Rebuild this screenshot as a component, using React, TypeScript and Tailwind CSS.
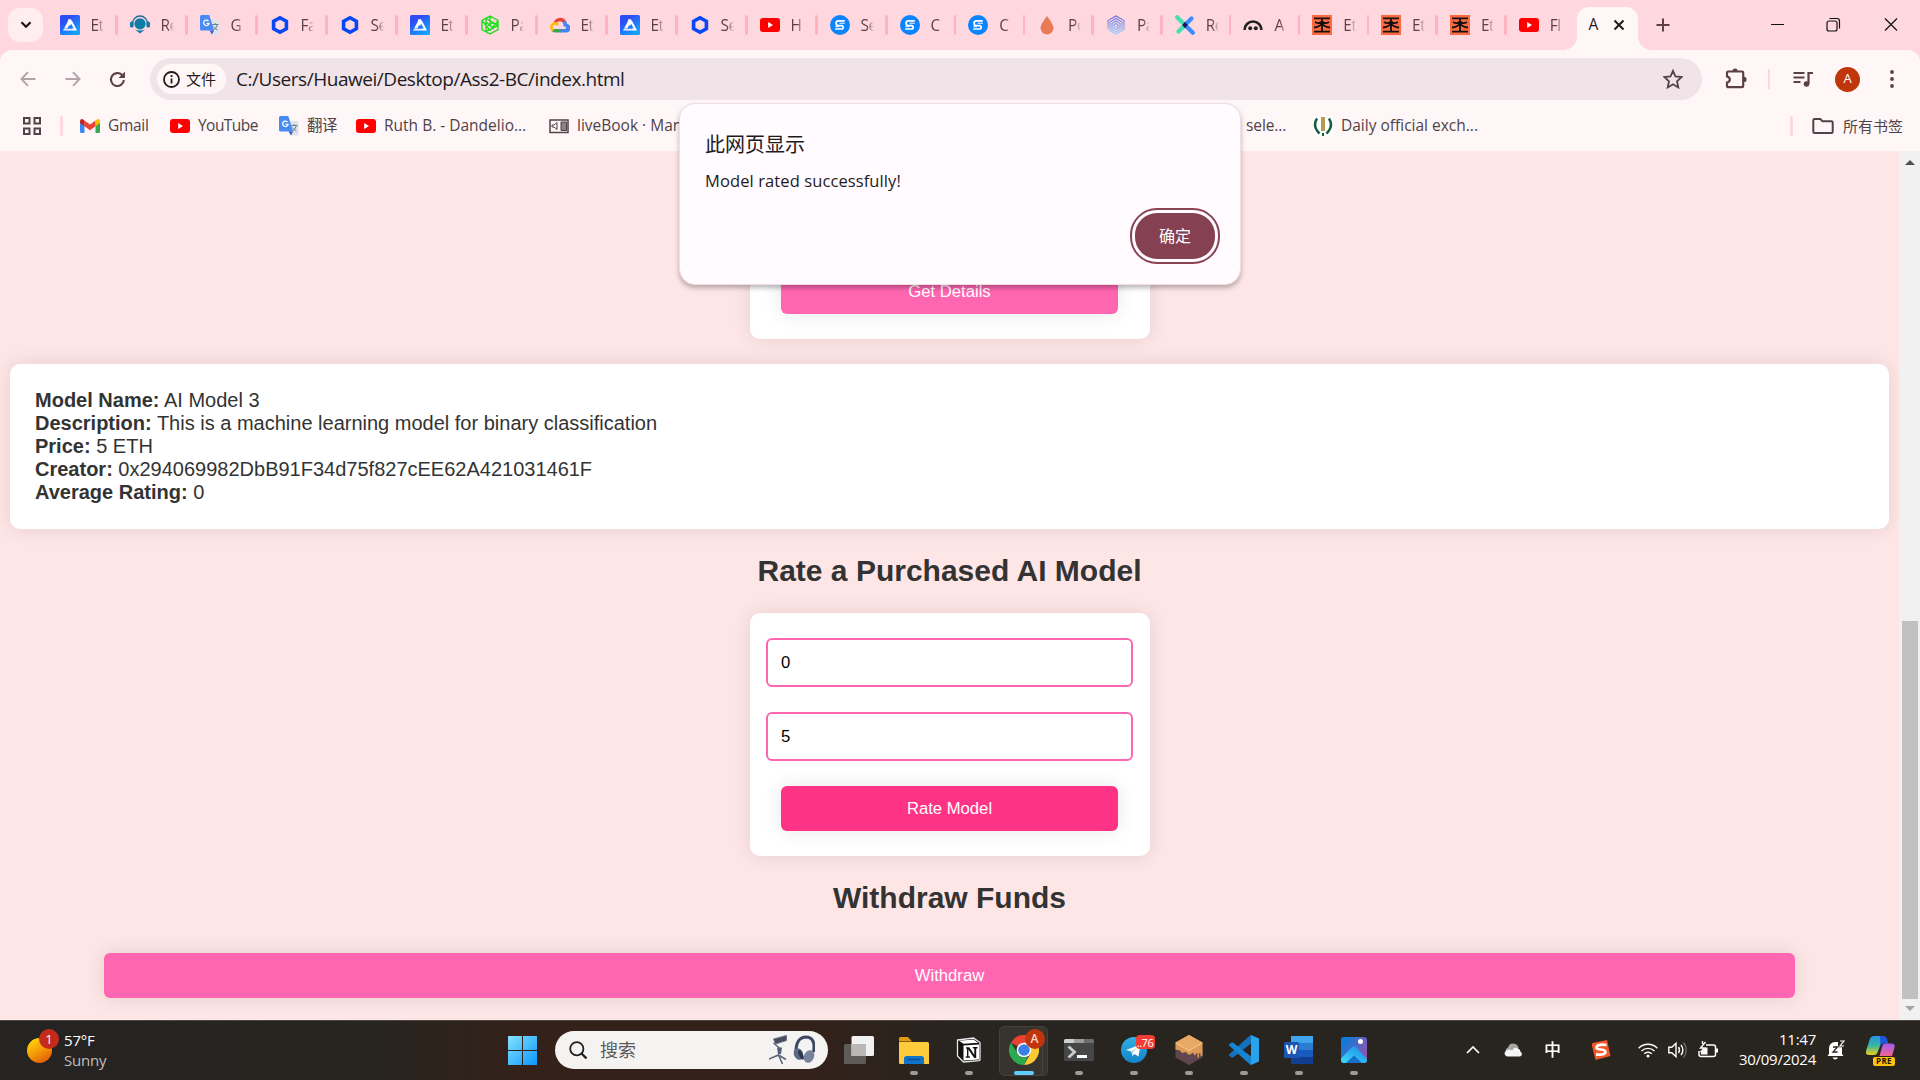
import React from "react";

type IconProps = { className?: string };

const Arweave = ({ className = "w-5 h-5" }: IconProps) => (
  <svg viewBox="0 0 20 20" className={className}>
    <defs>
      <linearGradient id="arb" x1="0" y1="0" x2="0.7" y2="1">
        <stop offset="0.3" stopColor="#2f4df5" />
        <stop offset="1" stopColor="#12a5ff" />
      </linearGradient>
    </defs>
    <rect width="20" height="20" rx="1.5" fill="url(#arb)" />
    <path d="M8.300 4.200h2.700l1.200 2.600-1.900 3.700-1.400-.100-1.600 3h6.500l-2.800-5 1.200-2.300L17 15.600H3L7.600 7Z" fill="#fff" />
    <path d="m2.500 13.700 9.500 0" stroke="#2b63f8" strokeWidth=".6" fill="none" />
  </svg>
);
const Headset = () => (
  <svg viewBox="0 0 20 20" className="w-5 h-5">
    <path d="M2.500 10V8.500a7.500 7.500 0 0 1 15 0V10" fill="none" stroke="#1b6f94" strokeWidth="1.300" />
    <circle cx="10" cy="8.800" r="5.600" fill="#0f7ca8" />
    <rect x="0" y="6.500" width="3.600" height="6" rx="1.500" fill="#0f7ca8" />
    <rect x="16.400" y="6.500" width="3.600" height="6" rx="1.500" fill="#0f7ca8" />
    <path d="M5 14.500Q10 16.500 15 14.500L10 18.500Z" fill="#0f7ca8" />
  </svg>
);
const Translate = () => (
  <svg viewBox="0 0 20 20" className="w-5 h-5">
    <path d="M8 5h10.500q1 0 1 1v12.500q0 1-1 1H12Z" fill="#dfe3e6" />
    <path d="M1.500 0h7.800l4.800 15.500H1.500Q0 15.500 0 14V1.500Q0 0 1.500 0Z" fill="#4a8af4" />
    <path d="M9.500 15.500h4.600L12 19.500Z" fill="#3262c9" />
    <path d="M8.500 6.200A2.700 2.700 0 1 0 9 8.300H6.600" fill="none" stroke="#fff" strokeWidth="1.300" />
    <path d="M12 9.500h6.500M15.200 8v1.500M17.300 9.700q-1 3.800-3.500 5.300M13.500 11.500q1.500 2.500 4 3.500" fill="none" stroke="#6b8198" strokeWidth="1" />
  </svg>
);
const Chainlink = () => (
  <svg viewBox="0 0 20 20" className="w-5 h-5">
    <path d="M10 2.700 16.400 6.300v7.400L10 17.300 3.600 13.700V6.300Z" fill="none" stroke="#0847f7" strokeWidth="3.600" />
  </svg>
);
const GreenGem = () => (
  <svg viewBox="0 0 20 20" className="w-5 h-5">
    <path d="M10 1 18 5.500v9L10 19 2 14.500v-9ZM6 3.500v13M6 3.500l12 7-12 6M6 7l8 7M10 1v8M2 5.500l8 10M18 6l-8 9.500M6 12l8-5" fill="none" stroke="#1fe01f" strokeWidth="1.400" />
  </svg>
);
const Cloud = () => (
  <svg viewBox="0 0 20 20" className="w-5 h-5">
    <path d="M3.600 7.500A6.800 6.800 0 0 1 15.800 6l-1.600 2.500a4.700 4.700 0 0 0-7.200-.8Z" fill="#ea4335" />
    <path d="M15.500 5.500q1.600 1.400 1.600 3.400A4.300 4.300 0 0 1 15.500 17.500H10v-3.400h5.300a1.500 1.500 0 0 0 0-2.600h-1.800v-1.100q0-1.700-1.200-2.600Z" fill="#4285f4" />
    <path d="M10.500 14.100v3.400H5.200a5 5 0 0 1-3.400-1.300L4.300 14Z" fill="#34a853" />
    <path d="M2.200 16.500A5.200 5.200 0 1 1 9 8.700L7 11a2.300 2.300 0 1 0-2.700 3.200Z" fill="#fbbc05" />
  </svg>
);
const YouTube = () => (
  <svg viewBox="0 0 20 20" className="w-5 h-5">
    <rect y="3" width="20" height="14" rx="3" fill="#f00" />
    <path d="m8.200 7 4.800 3-4.800 3Z" fill="#fff" />
  </svg>
);
const BlueS = () => (
  <svg viewBox="0 0 20 20" className="w-5 h-5">
    <circle cx="10" cy="10" r="10" fill="#0a84ff" />
    <path d="M14.800 5.800H8.500a2.400 2.400 0 0 0 0 4.800h3a1.700 1.700 0 0 1 0 3.400H5.200" fill="none" stroke="#fff" strokeWidth="1.700" />
    <path d="M14.800 8.200H9.500M5.200 11.700h4" fill="none" stroke="#fff" strokeWidth="1" />
  </svg>
);
const Drop = () => (
  <svg viewBox="0 0 20 20" className="w-5 h-5">
    <path d="M10 1q6.500 8.500 6.500 12a6.500 6.500 0 0 1-13 0Q3.500 9.500 10 1Z" fill="#ea7a56" />
  </svg>
);
const Swirl = () => (
  <svg viewBox="0 0 20 20" className="w-5 h-5">
    <defs>
      <linearGradient id="sw" x1="0" y1="0" x2="0" y2="1">
        <stop offset="0" stopColor="#6a6fd6" />
        <stop offset="1" stopColor="#9ed4ff" />
      </linearGradient>
    </defs>
    <path d="M2 14.500V5.500L10 1l8 4.500v9L10 19l-6-3.500V7L10 3.500 16 7v6.500L10 17l-4-2.500V8.500L10 6l4 2.500v4L10 14.500 8 13V9.800L10 8.500l2 1.500v1.800H10" fill="none" stroke="url(#sw)" strokeWidth="1.200" />
  </svg>
);
const CrossX = () => (
  <svg viewBox="0 0 20 20" className="w-5 h-5" strokeLinecap="round" strokeWidth="4.200">
    <path d="M16.500 3.500 10 10" stroke="#3b8cff" />
    <path d="M10 10 17.800 17.800" stroke="#3b8cff" />
    <path d="M2.200 2.200 10 10M10 10 3.500 16.500" stroke="#45e0b0" />
    <path d="m10 6.700 2.800 3.300L10 13.300 7.200 10Z" fill="#1a1266" stroke="none" />
  </svg>
);
const Arch = () => (
  <svg viewBox="0 0 20 20" className="w-5 h-5">
    <path d="M1.500 15a8.500 8.500 0 0 1 17 0" fill="none" stroke="#222" strokeWidth="2.500" />
    <circle cx="7.200" cy="13.300" r="2" fill="#222" />
    <circle cx="12.800" cy="13.300" r="2" fill="#222" />
  </svg>
);
const Orange = () => (
  <svg viewBox="0 0 20 20" className="w-5 h-5">
    <rect width="20" height="20" fill="#fb6a41" />
    <path d="M2 3.400h16M2 16.600h16M10 3.400v13.200M3 7q4 2.500 7-.500 3 3 7 .500M2 12.500q5.500-.500 8-4 2.500 3.500 8 4" fill="none" stroke="#15100e" strokeWidth="1.800" />
  </svg>
);

const tabs: { icon: () => React.ReactElement; label: string; narrow?: boolean }[] = [
  { icon: Arweave, label: "Et" },
  { icon: Headset, label: "Re" },
  { icon: Translate, label: "G" },
  { icon: Chainlink, label: "Fa" },
  { icon: Chainlink, label: "Se" },
  { icon: Arweave, label: "Et" },
  { icon: GreenGem, label: "Pa" },
  { icon: Cloud, label: "Et" },
  { icon: Arweave, label: "Et" },
  { icon: Chainlink, label: "Se" },
  { icon: YouTube, label: "H" },
  { icon: BlueS, label: "Se" },
  { icon: BlueS, label: "C", narrow: true },
  { icon: BlueS, label: "C", narrow: true },
  { icon: Drop, label: "Po", narrow: true },
  { icon: Swirl, label: "Pa", narrow: true },
  { icon: CrossX, label: "Re", narrow: true },
  { icon: Arch, label: "A", narrow: true },
  { icon: Orange, label: "Et", narrow: true },
  { icon: Orange, label: "Et", narrow: true },
  { icon: Orange, label: "Et", narrow: true },
];

const TabItem = ({ icon: I, label, narrow, last }: { icon: () => React.ReactElement; label: string; narrow?: boolean; last?: boolean }) => (
  <div className={`relative flex h-[50px] shrink-0 items-center pl-[13px] ${narrow ? "w-[68.800px]" : "w-[70px]"}`}>
    <I />
    <span className="ml-[11px] w-[20px] whitespace-nowrap text-[15.500px] leading-5 tracking-[-0.500px] text-[#5c4047] [mask-image:linear-gradient(90deg,#000_6px,transparent_13px)]">
      {label}
    </span>
    {!last && <span className="absolute right-[-1px] top-[15px] h-5 w-[2.500px] rounded-full bg-[#ffb3c1]" />}
  </div>
);

const TabStrip = () => (
  <div className="flex h-[50px] items-center bg-[#ffd7de]">
    <div className="ml-2 flex h-[34px] w-[35px] shrink-0 items-center justify-center rounded-[12px] bg-[#ffedf0]">
      <svg viewBox="0 0 12 8" className="h-2 w-3"><path d="m1.500 1.300 4.500 4.400 4.500-4.400" fill="none" stroke="#1e1216" strokeWidth="2.200" /></svg>
    </div>
    <div className="ml-[3.500px] flex">
      {tabs.map((t, i) => <TabItem key={i} {...t} last={false} />)}
      <TabItem icon={YouTube} label="Fl" narrow last />
    </div>
    <div className="relative ml-[3px] mt-auto flex h-[43px] w-[61px] shrink-0 items-center rounded-t-[12px] bg-[#fff7f7] pb-[7px] pl-[11px] pt-0">
      <span className="absolute -left-[13px] bottom-0 h-[13px] w-[13px] bg-[radial-gradient(circle_at_0_0,transparent_12.500px,#fff7f7_13px)]" />
      <span className="absolute -right-[13px] bottom-0 h-[13px] w-[13px] bg-[radial-gradient(circle_at_100%_0,transparent_12.500px,#fff7f7_13px)]" />
      <span className="w-[25px] text-[15.500px] text-[#241a1d]">A</span>
      <svg viewBox="0 0 12 12" className="h-3 w-3"><path d="m1.500 1.500 9 9m0-9-9 9" stroke="#1f1a1b" strokeWidth="2" /></svg>
    </div>
    <svg viewBox="0 0 14 14" className="ml-[18px] h-[14px] w-[14px] shrink-0"><path d="M7 .500v13M.500 7h13" stroke="#5c4047" strokeWidth="2" /></svg>
    <svg viewBox="0 0 130 16" className="ml-auto mr-[21px] h-4 w-[130px] shrink-0" fill="none" stroke="#111" strokeWidth="1.200">
      <path d="M2 7.500h13M116 1.500l12 12m0-12-12 12" />
      <rect x="58" y="4" width="10" height="10" rx="2" />
      <path d="M60.500 1.500h7.500q2.500 0 2.500 2.500v7.500" />
    </svg>
  </div>
);

const Toolbar = () => (
  <div className="bg-[#ffd7de]">
    <div className="flex h-[58px] items-center rounded-t-[12px] bg-[#fff7f7]">
      <svg viewBox="0 0 16 16" className="ml-5 h-4 w-4 shrink-0"><path d="M15.500 8H1.500M8 1.200 1.400 8 8 14.800" fill="none" stroke="#b3a2a7" strokeWidth="1.900" /></svg>
      <svg viewBox="0 0 16 16" className="ml-[29px] h-4 w-4 shrink-0"><path d="M.500 8h14M8 1.200 14.600 8 8 14.800" fill="none" stroke="#b3a2a7" strokeWidth="1.900" /></svg>
      <svg viewBox="0 0 16 16" className="ml-[28px] h-[17px] w-[17px] shrink-0"><path d="M14 8.500A6.100 6.100 0 1 1 12.300 3.800L14 5.500" fill="none" stroke="#5c4047" strokeWidth="2" /><path d="M15 .500v6H9Z" fill="#5c4047" /></svg>
      <div className="ml-6 flex h-[42px] w-[1552px] shrink-0 items-center rounded-full bg-[#f1e4e9] pl-[7px] pr-[19px]">
        <div className="flex h-[30px] w-[69px] items-center rounded-full bg-[#fff7f7] pl-[6px]">
          <svg viewBox="0 0 17 17" className="h-[17px] w-[17px]"><circle cx="8.500" cy="8.500" r="7.500" fill="none" stroke="#27191d" strokeWidth="1.800" /><path d="M8.500 7.500v5M8.500 4v2" stroke="#27191d" strokeWidth="1.800" /></svg>
          <span className="ml-[6px] whitespace-nowrap pt-px text-[15px] text-[#27191d]">文件</span>
        </div>
        <span className="ml-[10px] whitespace-nowrap text-[19px] tracking-[-0.460px] text-[#231a1d]">C:/Users/Huawei/Desktop/Ass2-BC/index.html</span>
        <svg viewBox="0 0 20 20" className="ml-auto h-5 w-5"><path d="m10 1.800 2.500 5.700 6 .600-4.500 4.200 1.300 6.100L10 15.200l-5.300 3.200L6 12.300 1.500 8.100l6-.600Z" fill="none" stroke="#4f4347" strokeWidth="1.800" /></svg>
      </div>
      <svg viewBox="0 0 22 22" className="ml-[23px] h-[22px] w-[22px] shrink-0"><path d="M3.500 3.500H17q1.200 0 1.200 1.200V18q0 1.200-1.200 1.200H3.300Q2 19.200 2 18v-3.400q2.800-.600 2.800-3T2 8.400V4.800Q2 3.500 3.300 3.500Z" fill="none" stroke="#5c4047" strokeWidth="2.200" /><path d="M7.500 3a2.600 2.600 0 0 1 5.200 0ZM19 8.800a2.600 2.600 0 0 1 0 5.200Z" fill="#5c4047" /></svg>
      <span className="ml-[21px] h-5 w-[2px] bg-[#ffd7de]" />
      <svg viewBox="0 0 20 18" className="ml-[23px] h-[18px] w-5 shrink-0" fill="none" stroke="#5c4047" strokeWidth="2.200"><path d="M.500 3h11M.500 7.500h11M.500 12h7M15.500 14V3h4.500" /><circle cx="13.500" cy="14" r="2.200" fill="#5c4047" strokeWidth="1.200" /></svg>
      <span className="ml-[22px] flex h-[25px] w-[25px] shrink-0 items-center justify-center rounded-full bg-[#bf360c] text-[13px] text-white">A</span>
      <svg viewBox="0 0 4 18" className="ml-[30px] h-[18px] w-1 shrink-0" fill="#5c4047"><circle cx="2" cy="2" r="1.900" /><circle cx="2" cy="9" r="1.900" /><circle cx="2" cy="16" r="1.900" /></svg>
    </div>
  </div>
);

const Bookmark = ({ icon, label, width, tracking = "" }: { icon: React.ReactNode; label: string; width: string; tracking?: string }) => (
  <div className={`flex shrink-0 items-center gap-2 whitespace-nowrap ${width} ${tracking}`}>
    {icon}
    <span>{label}</span>
  </div>
);

const Bookmarks = () => (
  <div className="flex h-[43px] items-center bg-[#fff7f7] pb-[7px] pt-0 text-[15.500px] text-[#4f4347]">
    <svg viewBox="0 0 18 18" className="ml-[23px] h-[18px] w-[18px] shrink-0" fill="none" stroke="#4f4347" strokeWidth="2"><path d="M1 1h5.500v5.500H1ZM11.500 1H17v5.500h-5.500ZM1 11.500h5.500V17H1ZM11.500 11.500H17V17h-5.500Z" /></svg>
    <span className="ml-[19px] mr-[17.500px] h-5 w-[2.500px] shrink-0 rounded-full bg-[#ffd7de]" />
    <Bookmark
      width="w-[90px]"
      label="Gmail"
      tracking="tracking-[-0.300px]"
      icon={
        <svg viewBox="0 0 20 20" className="h-5 w-5">
          <path d="M0 5v10.500Q0 17 1.500 17H4.500V8Z" fill="#4285f4" />
          <path d="M15.500 8v9h3q1.500 0 1.500-1.500V5Z" fill="#34a853" />
          <path d="m4.500 4.500 5.500 4 5.500-4v5.700L10 14.300l-5.500-4.100Z" fill="#ea4335" />
          <path d="M0 5.300Q0 3 2 3q1 0 2.500 1.500v5.700L0 7Z" fill="#c5221f" />
          <path d="M20 5.300Q20 3 18 3q-1 0-2.500 1.500v5.700L20 7Z" fill="#fbbc04" />
        </svg>
      }
    />
    <Bookmark width="w-[109px]" label="YouTube" tracking="tracking-[-0.550px]" icon={<YouTube />} />
    <Bookmark width="w-[77px]" label="翻译" tracking="tracking-[-0.500px]" icon={<Translate />} />
    <Bookmark width="w-[193px]" label="Ruth B. - Dandelio..." icon={<YouTube />} />
    <div className="w-[697px] shrink-0">
      <Bookmark
        width="w-[180px]"
        label="liveBook · Manning"
        icon={
          <svg viewBox="0 0 20 20" className="h-5 w-5" fill="none" stroke="#4f4347"><path d="M1 4h18v12.500H1Z" strokeWidth="1.500" /><path d="M12 6h5.500v8.500H12Z" fill="#8b8386" strokeWidth="1" /><path d="M3 9h2l3-2.500v7L5 11H3Z" strokeWidth="1" /></svg>
        }
      />
    </div>
    <span className="w-[67px] shrink-0 whitespace-nowrap tracking-[-0.100px]">sele...</span>
    <Bookmark
      width="w-[250px]"
      label="Daily official exch..."
      icon={
        <svg viewBox="0 0 20 20" className="h-5 w-5"><rect width="20" height="20" fill="#fff" /><path d="M4 2.500Q-1 10 6.500 17.500M16 2.500Q21 10 13.500 17.500" fill="none" stroke="#155a3c" strokeWidth="2.500" /><path d="M8 1h4v14H8Z" fill="#b39b52" /><path d="M9 17h2v3H9Z" fill="#155a3c" /></svg>
      }
    />
    <span className="ml-auto h-5 w-[2.500px] shrink-0 rounded-full bg-[#ffd7de]" />
    <svg viewBox="0 0 22 18" className="ml-[19px] h-[18px] w-[22px] shrink-0"><path d="M2.500 2h5.800l2.200 2.300h9q1.200 0 1.200 1.200v9.300q0 1.200-1.200 1.200h-17Q1.300 16 1.300 14.800V3.200Q1.300 2 2.500 2Z" fill="none" stroke="#4f4347" strokeWidth="2" /></svg>
    <span className="ml-[9px] mr-[17px] whitespace-nowrap text-[15px]">所有书签</span>
  </div>
);

const shadow = "shadow-[0_0_19px_rgba(0,0,0,0.1)]";

const PinkButton = ({ children, className }: { children: React.ReactNode; className: string }) => (
  <button className={`flex h-[45px] items-center justify-center rounded-[6px] pb-px text-[16.670px] text-white ${shadow} ${className}`}>{children}</button>
);
const Field = ({ value }: { value: string }) => (
  <input readOnly value={value} className="mb-[25px] block h-[49px] w-[367px] rounded-[6px] border-2 border-[#ff66b2] bg-white px-[13px] text-[16.670px] text-black outline-none" />
);

const details = [
  ["Model Name:", "AI Model 3"],
  ["Description:", "This is a machine learning model for binary classification"],
  ["Price:", "5 ETH"],
  ["Creator:", "0x294069982DbB91F34d75f827cEE62A421031461F"],
  ["Average Rating:", "0"],
];

const Page = () => (
  <main className="flex h-[869px] w-[1899px] flex-col items-center overflow-hidden bg-[#ffe6e6] font-['Liberation_Sans',Arial,sans-serif] text-[20px] leading-[23px] text-[#333]">
    <section className={`flex h-[188px] w-[400px] shrink-0 flex-col items-center justify-end rounded-[10px] bg-white pb-[25px] ${shadow}`}>
      <PinkButton className="w-[337px] bg-[#ff66b2]">Get Details</PinkButton>
    </section>
    <section className={`mt-[25px] h-[165px] w-[1879px] shrink-0 rounded-[10px] bg-white p-[25px] ${shadow}`}>
      {details.map(([k, v]) => (
        <p key={k}><strong>{k}</strong> {v}</p>
      ))}
    </section>
    <h2 className="mt-[25px] h-[34px] shrink-0 text-[30px] font-bold leading-[34px]">Rate a Purchased AI Model</h2>
    <section className={`mt-[25px] flex h-[243px] w-[400px] shrink-0 flex-col items-center rounded-[10px] bg-white pt-[25px] ${shadow}`}>
      <Field value="0" />
      <Field value="5" />
      <PinkButton className="w-[337px] bg-[#ff3385]">Rate Model</PinkButton>
    </section>
    <h2 className="mt-[25px] h-[34px] shrink-0 text-[30px] font-bold leading-[34px]">Withdraw Funds</h2>
    <PinkButton className="mt-[38px] w-[1691px] shrink-0 bg-[#ff66b2]">Withdraw</PinkButton>
  </main>
);

const Scrollbar = () => (
  <aside className="flex h-[869px] w-[21px] flex-col items-center bg-[#f1f1f1]">
    <svg viewBox="0 0 10 5" className="mt-[9px] h-[5px] w-[10px]"><path d="m0 5 5-5 5 5Z" fill="#505050" /></svg>
    <div className="mt-auto h-[378px] w-[16px] bg-[#c1c1c1]" />
    <svg viewBox="0 0 10 5" className="mb-[9px] mt-[7px] h-[5px] w-[10px]"><path d="m0 0 5 5 5-5Z" fill="#a3a3a3" /></svg>
  </aside>
);

const Alert = () => (
  <div className="absolute left-[679px] top-[103px] flex h-[182px] w-[562px] flex-col rounded-[16px] border border-[#f1dde3] bg-[#fffbff] px-[25px] pt-[29px] shadow-[0_3px_5px_rgba(0,0,0,0.28)]">
    <p className="text-[20px] leading-6 text-[#1f1a1c]">此网页显示</p>
    <p className="mt-[12px] text-[16.500px] leading-6 tracking-[0.100px] text-[#1f1a1c]">Model rated successfully!</p>
    <button className="absolute right-[20px] top-[104px] flex h-[56px] w-[90px] items-center justify-center rounded-[27px] border-[2.500px] border-[#8a4257]">
      <span className="flex h-[46px] w-[80px] items-center justify-center rounded-[22px] bg-[#854052] text-[16px] text-white">确定</span>
    </button>
  </div>
);

const Notion = () => (
  <svg viewBox="0 0 26 26" className="h-[26px] w-[26px]"><path d="M1.500 3 17.500 1 24 5.500V22.500q0 1-1 1.200L7.500 25 1.500 19Z" fill="#111" stroke="#e8e8e8" strokeWidth="1.300" /><path d="m3 3.800 14.500-1.300 4.500 3.200-14.500 1Z" fill="#fff" /><path d="M7.500 8.500 23 7.500v15L7.500 23.500Z" fill="#fff" /><path d="M10 10.200h3.300l5 7.500v-6.200l-1.500-.300v-1.200h4.700v1.200l-1.300.500v9.300h-2l-5.800-8.500v6.800l1.600.300v1.200H9.700v-1.200l1.300-.400V11.700l-1-.300Z" fill="#111" /></svg>
);
const Chrome = () => (
  <div className="relative h-[30px] w-[30px]">
    <svg viewBox="0 0 30 30" className="h-[30px] w-[30px]">
      <path d="M15 15 2 7.500A15 15 0 0 1 28 7.500L15 8Z" fill="#ea4335" />
      <path d="M15 0A15 15 0 0 1 28 7.500H15Z" fill="#ea4335" />
      <path d="M28 7.500A15 15 0 0 1 15 30L21.500 18.500 15 7.500Z" fill="#fcc934" />
      <path d="M2 7.500 8.800 18.800Q11 22.500 15 22.500q2 0 4-1L15 30A15 15 0 0 1 2 7.500Z" fill="#2da94f" />
      <circle cx="15" cy="15" r="7.300" fill="#fff" />
      <circle cx="15" cy="15" r="5.800" fill="#3b7de9" />
    </svg>
    <span className="absolute -right-[6px] -top-[6px] flex h-5 w-5 items-center justify-center rounded-full bg-[#bf360c] text-[12px] font-semibold text-[#ffd8cd]">A</span>
  </div>
);
const Terminal = () => (
  <svg viewBox="0 0 30 22" className="h-[22px] w-[30px]"><rect width="30" height="22" rx="1.500" fill="#454647" /><path d="M1.500 0H10v4H0V1.500Q0 0 1.500 0Z" fill="#cfcfcf" /><path d="M10 0h10v4H10Z" fill="#9c9c9c" /><path d="M20 0h8.500Q30 0 30 1.500V4H20Z" fill="#6c6c6c" /><path d="m4.500 7.500 6 5.500-6 5.500" fill="none" stroke="#ccc" strokeWidth="2.800" /><path d="M13 17.500h10" stroke="#fff" strokeWidth="3" /></svg>
);
const Telegram = () => (
  <div className="relative h-[26px] w-[26px]">
    <svg viewBox="0 0 26 26" className="h-[26px] w-[26px]"><defs><linearGradient id="tg" x1="0" y1="0" x2="0" y2="1"><stop stopColor="#33aee5" /><stop offset="1" stopColor="#1283c9" /></linearGradient></defs><circle cx="13" cy="13" r="13" fill="url(#tg)" /><path d="M5 13 19.500 7.500 17.500 19.500 13.500 17l-2.200 2-.800-4.500Z" fill="#fff" /><path d="m10.500 14.500 6-4.500-4.300 5.500-.900 3.500Z" fill="#b9d9ee" /></svg>
    <span className="absolute -top-[2px] left-[15px] flex h-[14px] w-[19px] items-center justify-center rounded-[4px] bg-[#f23c34] text-[11px] leading-none tracking-[-0.500px] text-white">..76</span>
  </div>
);
const Ganache = () => (
  <svg viewBox="0 0 28 30" className="h-[30px] w-[28px]"><path d="M14 0 27.500 7.500v15L14 30 .500 22.500v-15Z" fill="#614650" /><path d="M14 0 27.500 7.500v13q-1 1.500-2 0v-2q-.800-1-1.500 0v4h-1.500v-4q-1-1-1.500 0v1q-1 1-2 0l-1-2-2.500 2h-2.500l-2-2.500-4 1-2-2.500L.500 14.500v-7Z" fill="#dc9c58" /><path d="M14 0 27.500 7.500 14 15 .500 7.500Z" fill="#e8a964" /><path d="m1 8 13 7.500L27 8" fill="none" stroke="#f3c185" strokeWidth="1.200" /></svg>
);
const VSCode = () => (
  <svg viewBox="0 0 30 30" className="h-[30px] w-[30px]"><path d="M22 0v8.500L4 22.500 2.500 22.500 0 20.500v-1L21 .500Z" fill="#1272bd" /><path d="M22 30v-8.500L4 7.500H2.500L0 9.500v1L21 29.500Z" fill="#1685d1" /><path d="M22 0 30 3.500v23L22 30Z" fill="#29a3ee" /></svg>
);
const Word = () => (
  <div className="relative h-[28px] w-[29px]">
    <svg viewBox="0 0 29 28" className="h-[28px] w-[29px]"><path d="M7 0h22v7H7Z" fill="#41a5ee" /><path d="M7 7h22v7H7Z" fill="#2b7cd3" /><path d="M7 14h22v7H7Z" fill="#185abd" /><path d="M7 21h22v7H7Z" fill="#103f91" /><rect y="6" width="15" height="16" rx="1.500" fill="#1d55b4" /></svg>
    <span className="absolute left-0 top-[6px] flex h-4 w-[15px] items-center justify-center text-[12px] font-bold leading-none text-white">W</span>
  </div>
);
const Photos = () => (
  <svg viewBox="0 0 26 26" className="h-[26px] w-[26px]"><defs><linearGradient id="ph" x1="0" y1="0" x2="1" y2=".6"><stop offset=".2" stopColor="#1379d8" /><stop offset="1" stopColor="#8f55b0" /></linearGradient><linearGradient id="pm" x1="0" y1="1" x2="1" y2="0"><stop stopColor="#3fdcf5" /><stop offset="1" stopColor="#1a87e8" /></linearGradient></defs><rect width="26" height="26" rx="3" fill="url(#ph)" /><path d="M0 21.500 11 10q2-1.500 4 0L26 22v1q0 3-3 3H3q-3 0-3-3Z" fill="url(#pm)" /><path d="m5 26 8-7.500L21 26Z" fill="#176fc9" /><circle cx="19.500" cy="4.500" r="2.500" fill="#fff" /></svg>
);
const TaskView = () => (
  <svg viewBox="0 0 30 28" className="h-[28px] w-[30px]"><rect y="8" width="22" height="20" rx="1.500" fill="#5e5c5b" /><rect x="7.500" width="22.500" height="20" rx="1.500" fill="#f1f1f1" /><path d="M7.500 8H22v12H7.500Z" fill="#b9b8b7" /></svg>
);
const Explorer = () => (
  <svg viewBox="0 0 30 27" className="h-[27px] w-[30px]"><path d="M1.500 0H9l4 4.500H0V1.500Q0 0 1.500 0Z" fill="#e09c0b" /><path d="M0 5h28.500Q30 5 30 6.500V27H1.500Q0 27 0 25.500Z" fill="#ffcb3d" /><path d="M5 27v-5.500Q5 19 7.500 19h15q2.500 0 2.500 2.500V27Z" fill="#1173c9" /><path d="M8.500 22.500h13" stroke="#0a4f94" strokeWidth="1.300" /></svg>
);

const apps: { icon: React.ReactNode; active?: boolean; idle?: boolean }[] = [
  { icon: <TaskView />, idle: true },
  { icon: <Explorer /> },
  { icon: <Notion /> },
  { icon: <Chrome />, active: true },
  { icon: <Terminal /> },
  { icon: <Telegram /> },
  { icon: <Ganache /> },
  { icon: <VSCode /> },
  { icon: <Word /> },
  { icon: <Photos /> },
];

const Taskbar = () => (
  <footer className="flex h-[60px] items-center border-t border-[#4b4b44] bg-[linear-gradient(90deg,#252423_0%,#28241f_20%,#33211a_27%,#33211a_42%,#28241f_50%,#28241e_100%)] pb-px">
    <div className="flex w-[508px] shrink-0 items-center">
      <div className="relative mb-[8px] ml-[27px] h-[34px] w-[32px]">
        <span className="absolute bottom-0 left-0 h-[25px] w-[25px] rounded-full bg-[linear-gradient(150deg,#ffd60a_10%,#f59a08_50%,#e05206_95%)]" />
        <span className="absolute right-0 top-0 flex h-5 w-5 items-center justify-center rounded-full bg-[#c42b1c] text-[13px] leading-none text-white">1</span>
      </div>
      <div className="mb-px ml-[5px] text-[15px] leading-5 tracking-[-0.200px] text-white">
        <p>57°F</p>
        <p className="text-[#c0bebc]">Sunny</p>
      </div>
    </div>
    <svg viewBox="0 0 29 29" className="h-[29px] w-[29px] shrink-0"><defs><linearGradient id="win" x1="0" y1="0" x2="1" y2="1"><stop stopColor="#86e3ff" /><stop offset="1" stopColor="#0b95fa" /></linearGradient></defs><path d="M0 0h14v14H0ZM15 0h14v14H15ZM0 15h14v14H0ZM15 15h14v14H15Z" fill="url(#win)" /></svg>
    <div className="ml-[18px] flex h-[38px] w-[273px] shrink-0 items-center rounded-full bg-[#f4f3f2] pl-[14px] pr-[13px]">
      <svg viewBox="0 0 18 18" className="h-[18px] w-[18px]"><circle cx="7.800" cy="7.800" r="6.600" fill="none" stroke="#222" strokeWidth="1.800" /><path d="m12.500 12.500 5 5" stroke="#222" strokeWidth="2.300" /></svg>
      <span className="ml-[13px] text-[18px] leading-none text-[#5c5a59]">搜索</span>
      <svg viewBox="0 0 46 30" className="ml-auto h-[30px] w-[46px]" fill="none">
        <path d="m4.500 4 13-3.500v5L6.500 9Z" fill="#474c5c" stroke="#6d7384" strokeWidth="1" />
        <path d="M4.500 8 11 13.500" stroke="#5c6578" strokeWidth="1.500" />
        <path d="M8 12.500h5l-1 6.500H9Z" fill="#56607a" />
        <path d="M0 24l9.500-4L17 24.500M9.500 20l4 9" stroke="#5c6578" strokeWidth="1.600" />
        <path d="M27 20Q26 2 37.500 2 47 3 44.500 17" stroke="#3c4862" strokeWidth="3" />
        <ellipse cx="29.500" cy="19" rx="4.500" ry="6" transform="rotate(-25 29.500 19)" fill="#5d6a86" />
        <ellipse cx="40" cy="21.500" rx="5" ry="6.500" transform="rotate(25 40 21.500)" fill="#77829b" />
        <ellipse cx="32" cy="20" rx="2" ry="5" transform="rotate(-25 32 20)" fill="#2e3850" />
      </svg>
    </div>
    <div className="ml-[3px] flex shrink-0">
      {apps.map((a, i) => (
        <div key={i} className="relative flex h-[59px] w-[55px] items-center justify-center">
          {a.active && <span className="absolute left-[3px] top-[5px] h-[50px] w-[49px] rounded-[5px] border border-[#45403b] bg-[#37332e]" />}
          {a.active && <span className="absolute left-[3px] top-[5px] h-[50px] w-[44px] rounded-[5px] border-r border-[#4a4640]" />}
          <div className="relative">{a.icon}</div>
          {!a.idle && <span className={`absolute bottom-[5px] h-1 rounded-full ${a.active ? "w-5 bg-[#60cdff]" : "w-2 bg-[#9d9a98]"}`} />}
        </div>
      ))}
    </div>
    <div className="ml-auto flex shrink-0 items-center">
      <svg viewBox="0 0 14 8" className="h-2 w-[14px]"><path d="m1 7 6-6 6 6" fill="none" stroke="#fff" strokeWidth="1.700" /></svg>
      <svg viewBox="0 0 20 14" className="ml-[23px] h-[14px] w-5"><path d="M5 12a4 4 0 0 1 0-7.500Q6.500 0 10.500.500 15 1 15.500 5L9 12Z" fill="#a6a5a4" /><path d="M4 13.500a3 3 0 0 1-1-5.500Q6 5.500 9 7.500q2-4 6-2 2.500.800 2.500 3.300A2.500 2.500 0 0 1 17 13.500Z" fill="#f5f5f5" /></svg>
      <span className="mb-px ml-[21px] w-[18px] text-[17px] font-medium leading-none text-white">中</span>
      <svg viewBox="0 0 20 20" className="ml-[29px] h-5 w-5"><path d="m1.500 3 14.500-3L19.500 16 4.500 20 .800 5Z" fill="#f1582b" /><path d="M15.500 5Q7 3.800 5.500 7q-.500 2.500 4.500 2.500 5 .500 4.500 3-1.500 3-9.500 1.800" fill="none" stroke="#fff" strokeWidth="2.700" /></svg>
      <svg viewBox="0 0 20 16" className="ml-[27px] h-4 w-5" fill="none" stroke="#fff" strokeWidth="1.400"><path d="M.700 6.200a13 13 0 0 1 18.600 0M3.500 9a9.300 9.300 0 0 1 13 0M6.200 11.700a5.500 5.500 0 0 1 7.600 0" /><circle cx="10" cy="14" r="1.500" fill="#fff" stroke="none" /></svg>
      <svg viewBox="0 0 20 18" className="ml-[10px] h-[18px] w-5" fill="none" stroke="#fff" strokeWidth="1.400"><path d="M.800 6.300h3L8 2.300v13.400L3.800 11.700h-3ZM10.500 6q2 3 0 6M13 3.800q3.800 5.200 0 10.400" /><path d="M15.500 1.500q5.500 7.500 0 15" stroke="#6a6864" /></svg>
      <svg viewBox="0 0 20 18" className="ml-[10px] h-[18px] w-5" fill="none" stroke="#fff" strokeWidth="1.500"><path d="M8 4h7.500Q17.500 4 17.500 6v7.500q0 2-2 2H3q-2 0-2-2V10" /><path d="M18 7.500h2v4h-2Z" fill="#fff" stroke="none" /><path d="M3 13.500V10l5-3.500h1.500v7Z" fill="#fff" stroke="none" /><path d="M4.500 0v3M7.500 1 2.500 7h4L2.500 11" strokeWidth="1.400" /></svg>
      <div className="mb-[2px] ml-[10px] w-[88px] text-right text-[15px] leading-5 tracking-[-0.250px] text-white">
        <p>11:47</p>
        <p>30/09/2024</p>
      </div>
      <svg viewBox="0 0 18 20" className="ml-[11px] h-5 w-[18px]"><path d="M2 14V8.500a6 6 0 0 1 6-6.500h3v4h4v8l1.500 2H.500Z" fill="#fff" /><path d="M5.500 17.500h5.500q-1 2-2.800 2t-2.700-2Z" fill="#fff" /><path d="M6 7h4.500L6 12h4.500M12.500 1.500H17L12.500 6.500H17" fill="none" stroke="#28241e" strokeWidth="1.300" /><path d="M13 1h4l-4 5h4" fill="none" stroke="#fff" strokeWidth="1.200" /></svg>
      <div className="relative ml-[21px] mr-[25px] h-[29px] w-[29px]">
        <svg viewBox="0 0 29 29" className="h-[29px] w-[29px]"><defs><linearGradient id="c1" x1="0" y1="0" x2="0" y2="1"><stop stopColor="#2495e8" /><stop offset=".5" stopColor="#38b5a0" /><stop offset="1" stopColor="#f0d01a" /></linearGradient><linearGradient id="c2" x1="0" y1="0" x2="0" y2="1"><stop stopColor="#a15cf0" /><stop offset="1" stopColor="#f3648f" /></linearGradient></defs><path d="M8 0h10l-6.500 16.500Q10.500 19 8 19H3q-4 0-3-4L3.500 4Q4.800 0 8 0Z" fill="url(#c1)" /><path d="M14 0h3.500q2.500 0 3.500 3l1.500 4.500h-5q-2 0-3 3Z" fill="#1f56d6" /><path d="M18 7.500h7.500q4 0 3 4L26 20H13.500L16 11q1-3.500 3-3.500Z" fill="url(#c2)" /></svg>
        <span className="absolute -bottom-px left-[7px] flex h-[9px] w-[22px] items-center justify-center rounded-[2px] bg-[#ffc20e] text-[8px] font-bold leading-none tracking-[0.400px] text-[#1b1600]">PRE</span>
      </div>
    </div>
  </footer>
);

export default function App() {
  return (
    <div className="relative h-[1080px] w-[1920px] overflow-hidden font-['Open_Sans','Noto_Sans_CJK_SC',sans-serif]">
      <TabStrip />
      <Toolbar />
      <Bookmarks />
      <div className="flex">
        <Page />
        <Scrollbar />
      </div>
      <Taskbar />
      <Alert />
    </div>
  );
}
